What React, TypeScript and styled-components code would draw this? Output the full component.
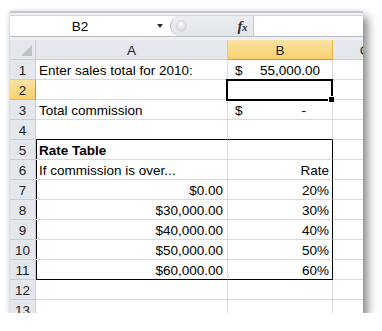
import styled, { createGlobalStyle } from 'styled-components'

const GlobalStyle = createGlobalStyle`
  html, body {
    margin: 0;
    padding: 0;
    background: #ffffff;
  }
  body {
    font-family: 'Liberation Sans', Arial, sans-serif;
  }
`

type Align = 'left' | 'right' | 'center'

type CellData = {
  text?: string
  align?: Align
  bold?: boolean
  acct?: [string, string, number]
  selected?: boolean
}

type RowData = {
  a: CellData
  b: CellData
  // outline of the rate table
  boxTop?: boolean
  boxSide?: boolean
  boxBottom?: boolean
}

const rows: RowData[] = [
  { a: { text: 'Enter sales total for 2010:' }, b: { acct: ['$', '55,000.00', 8] } },
  { a: {}, b: { selected: true } },
  { a: { text: 'Total commission' }, b: { acct: ['$', '-', 22] } },
  { a: {}, b: {}, boxTop: true },
  { a: { text: 'Rate Table', bold: true }, b: {}, boxSide: true },
  { a: { text: 'If commission is over...' }, b: { text: 'Rate', align: 'right' }, boxSide: true },
  { a: { text: '$0.00', align: 'right' }, b: { text: '20%', align: 'right' }, boxSide: true },
  { a: { text: '$30,000.00', align: 'right' }, b: { text: '30%', align: 'right' }, boxSide: true },
  { a: { text: '$40,000.00', align: 'right' }, b: { text: '40%', align: 'right' }, boxSide: true },
  { a: { text: '$50,000.00', align: 'right' }, b: { text: '50%', align: 'right' }, boxSide: true },
  { a: { text: '$60,000.00', align: 'right' }, b: { text: '60%', align: 'right' }, boxSide: true, boxBottom: true },
  { a: {}, b: {} },
  { a: {}, b: {} }
]

const activeRow = 2

function CellContent({ data }: { data: CellData }) {
  if (data.acct) {
    const [sign, value, pad] = data.acct
    return (
      <Acct style={{ paddingRight: pad }}>
        <span>{sign}</span>
        <span>{value}</span>
      </Acct>
    )
  }
  return <>{data.text}</>
}

export default function App() {
  return (
    <>
      <GlobalStyle />
      <Window>
        {/* FORMULA BAR */}
        <TopStrip>
          <FormulaBar>
            <NameBox>
              <NameText>B2</NameText>
              <DropArrow />
            </NameBox>
            <Splitter>
              <Knob />
              <Fx>
                f<small>x</small>
              </Fx>
            </Splitter>
            <FormulaInput />
          </FormulaBar>
        </TopStrip>

        {/* SHEET */}
        <Sheet>
          <Corner>
            <CornerTriangle />
          </Corner>
          <ColHead>A</ColHead>
          <ColHead $active>B</ColHead>
          <ColHead>C</ColHead>

          {rows.map((row, i) => (
            <Row key={i}>
              <RowHead $active={i + 1 === activeRow}>{i + 1}</RowHead>
              <Cell
                $align={row.a.align}
                $bold={row.a.bold}
                $left={row.boxSide || row.boxBottom}
                $bottom={row.boxTop || row.boxBottom}
              >
                <CellContent data={row.a} />
              </Cell>
              <Cell
                $align={row.b.align}
                $bold={row.b.bold}
                $right={row.boxSide || row.boxBottom}
                $bottom={row.boxTop || row.boxBottom}
                $pad={row.b.align === 'right' ? 3 : undefined}
              >
                <CellContent data={row.b} />
                {row.b.selected && (
                  <Selection>
                    <Handle />
                  </Selection>
                )}
              </Cell>
              <Cell />
            </Row>
          ))}
        </Sheet>
      </Window>
    </>
  )
}

const Window = styled.div`
  margin: 11px 0 0 10px;
  width: 353px;
  height: 302px;
  overflow: hidden;
  background: #ffffff;
  border-top: 2px solid #c4c8ce;
  box-sizing: border-box;
  box-shadow: 5px 6px 9px rgba(0, 0, 0, 0.45), -1px 0 4px rgba(0, 0, 0, 0.12);
  display: flex;
  flex-direction: column;
`

const TopStrip = styled.div`
  background: #eef0f3;
  padding: 2px 0 3px;
`

const FormulaBar = styled.div`
  display: flex;
  height: 22px;
  box-sizing: border-box;
  border-top: 1px solid #d3d6db;
  border-bottom: 1px solid #b8bcc3;
  background: #ffffff;
`

const NameBox = styled.div`
  width: 160px;
  display: flex;
  align-items: center;
  font-size: 13.5px;
  color: #000;
`

const NameText = styled.span`
  width: 140px;
  text-align: center;
`

const DropArrow = styled.span`
  margin-left: 7px;
  width: 0;
  height: 0;
  border-left: 3.5px solid transparent;
  border-right: 3.5px solid transparent;
  border-top: 4px solid #2b2b2b;
`

const Splitter = styled.div`
  width: 84px;
  display: flex;
  align-items: center;
  justify-content: space-between;
  background: linear-gradient(#eceef1, #e2e5e9);
  border-left: 1px solid #b8bcc3;
  border-right: 1px solid #c8ccd2;
  border-radius: 11px 0 0 11px;
  box-sizing: border-box;
  padding: 0 6px 0 5px;
`

const Knob = styled.span`
  width: 9px;
  height: 10px;
  border-radius: 50%;
  background: radial-gradient(circle at 40% 35%, #fafafa, #c9ccd1);
  border: 1px solid #d6d9dd;
`

const Fx = styled.span`
  font-family: 'Liberation Serif', 'Times New Roman', serif;
  font-style: italic;
  font-weight: bold;
  font-size: 15px;
  color: #333;
  letter-spacing: -0.5px;

  small {
    font-size: 11px;
  }
`

const FormulaInput = styled.div`
  flex: 1;
  background: #ffffff;
`

const Sheet = styled.div`
  display: grid;
  grid-template-columns: 26px 192px 105px 64px;
  grid-auto-rows: 20px;
  font-size: 13.5px;
  color: #000;
`

const Row = styled.div`
  display: contents;
`

const Corner = styled.div`
  position: relative;
  background: #e4e7eb;
  border-right: 1px solid #c9ccd1;
  border-bottom: 1px solid #c9ccd1;
`

const CornerTriangle = styled.span`
  position: absolute;
  right: 3px;
  bottom: 3px;
  width: 0;
  height: 0;
  border-left: 11px solid transparent;
  border-bottom: 11px solid #bec2c8;
`

const ColHead = styled.div<{ $active?: boolean }>`
  display: flex;
  align-items: center;
  justify-content: center;
  padding-top: 1px;
  box-sizing: border-box;
  color: #1e1e1e;
  background: ${(p) => (p.$active ? 'linear-gradient(#fbe3a3, #f8d06d)' : '#e4e7eb')};
  border-right: 1px solid ${(p) => (p.$active ? '#f0b44c' : '#c9ccd1')};
  border-bottom: 1px solid ${(p) => (p.$active ? '#d8962f' : '#c9ccd1')};
`

const RowHead = styled.div<{ $active?: boolean }>`
  display: flex;
  align-items: center;
  justify-content: center;
  padding-top: 1px;
  box-sizing: border-box;
  color: #1e1e1e;
  background: ${(p) => (p.$active ? 'linear-gradient(#fbe3a3, #f8d06d)' : '#e4e7eb')};
  border-right: 1px solid ${(p) => (p.$active ? '#d8962f' : '#c9ccd1')};
  border-bottom: 1px solid ${(p) => (p.$active ? '#f0b44c' : '#c9ccd1')};
`

const Cell = styled.div<{
  $align?: Align
  $bold?: boolean
  $left?: boolean
  $right?: boolean
  $bottom?: boolean
  $pad?: number
}>`
  position: relative;
  box-sizing: border-box;
  padding: 2px ${(p) => p.$pad ?? 4}px 0 3px;
  line-height: 18px;
  white-space: nowrap;
  text-align: ${(p) => p.$align ?? 'left'};
  font-weight: ${(p) => (p.$bold ? 700 : 400)};
  border-right: 1px solid ${(p) => (p.$right ? '#000' : '#d9d9d9')};
  border-bottom: 1px solid ${(p) => (p.$bottom ? '#000' : '#d9d9d9')};
  box-shadow: ${(p) => (p.$left ? 'inset 1px 0 0 #000' : 'none')};
`

const Acct = styled.div`
  display: flex;
  justify-content: space-between;
  padding-left: 4px;
`

const Selection = styled.div`
  position: absolute;
  z-index: 2;
  top: -1px;
  left: -2px;
  right: -1px;
  bottom: -2px;
  border: 2px solid #000;
`

const Handle = styled.span`
  position: absolute;
  right: -4px;
  bottom: -4px;
  width: 5px;
  height: 5px;
  background: #000;
  border: 1px solid #fff;
`
